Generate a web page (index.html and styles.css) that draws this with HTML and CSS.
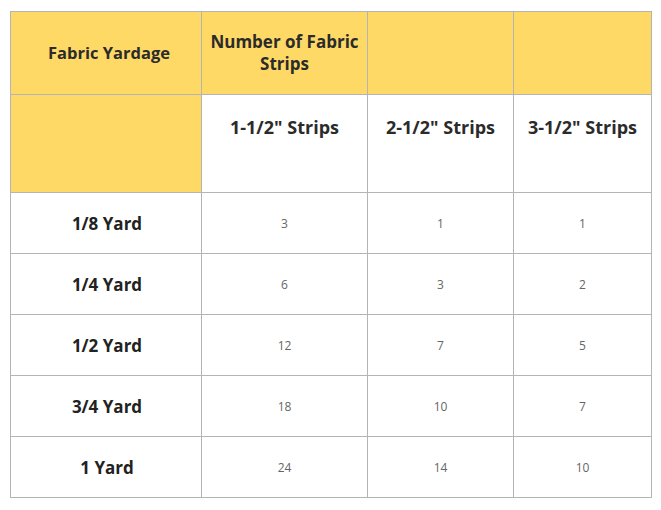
FILE: index.html
```html
<!DOCTYPE html>
<html>
<head>
<meta charset="utf-8">
<link rel="stylesheet" href="styles.css">
</head>
<body>
<table class="strips">
  <colgroup>
    <col class="c1"><col class="c2"><col class="c3"><col class="c4">
  </colgroup>
  <tr class="head-row">
    <th class="hl first">Fabric Yardage</th>
    <th class="hl">Number of Fabric Strips</th>
    <th class="hl"></th>
    <th class="hl"></th>
  </tr>
  <tr class="sub-row">
    <th class="hl"></th>
    <th class="sub">1-1/2" Strips</th>
    <th class="sub">2-1/2" Strips</th>
    <th class="sub">3-1/2" Strips</th>
  </tr>
  <tr class="data-row"><th class="yard">1/8 Yard</th><td>3</td><td>1</td><td>1</td></tr>
  <tr class="data-row"><th class="yard">1/4 Yard</th><td>6</td><td>3</td><td>2</td></tr>
  <tr class="data-row"><th class="yard">1/2 Yard</th><td>12</td><td>7</td><td>5</td></tr>
  <tr class="data-row"><th class="yard">3/4 Yard</th><td>18</td><td>10</td><td>7</td></tr>
  <tr class="data-row"><th class="yard">1 Yard</th><td>24</td><td>14</td><td>10</td></tr>
</table>
</body>
</html>
```
FILE: styles.css
```css
html, body {
  margin: 0;
  padding: 0;
  background: #fff;
}
body {
  padding: 11px 10px;
  font-family: "Open Sans", "Liberation Sans", sans-serif;
  color: #333;
}
.strips {
  border-collapse: collapse;
  table-layout: fixed;
  width: 641px;
  border: 1px solid #7f7f7f;
}
.c1 { width: 191px; }
.c2 { width: 166px; }
.c3 { width: 146px; }
.c4 { width: 138px; }
.strips th, .strips td {
  border: 1px solid #b4b4b4;
  text-align: center;
  padding: 0 4px;
}
.head-row { height: 83px; }
.sub-row { height: 98px; }
.data-row { height: 61px; }
.strips .hl {
  background: #ffd966;
  font-size: 17px;
  font-weight: 700;
  line-height: 22px;
  color: #2b2b2b;
}
.strips .first {
  font-size: 16.5px;
  padding-left: 10px;
}
.strips .sub {
  vertical-align: top;
  padding-top: 20px;
  font-size: 18px;
  font-weight: 700;
  line-height: 24px;
  color: #2b2b2b;
  background: #fff;
}
.strips .yard {
  font-size: 17px;
  font-weight: 700;
  color: #222;
  padding-left: 6px;
}
.strips td {
  font-size: 12px;
  color: #666;
}
```
